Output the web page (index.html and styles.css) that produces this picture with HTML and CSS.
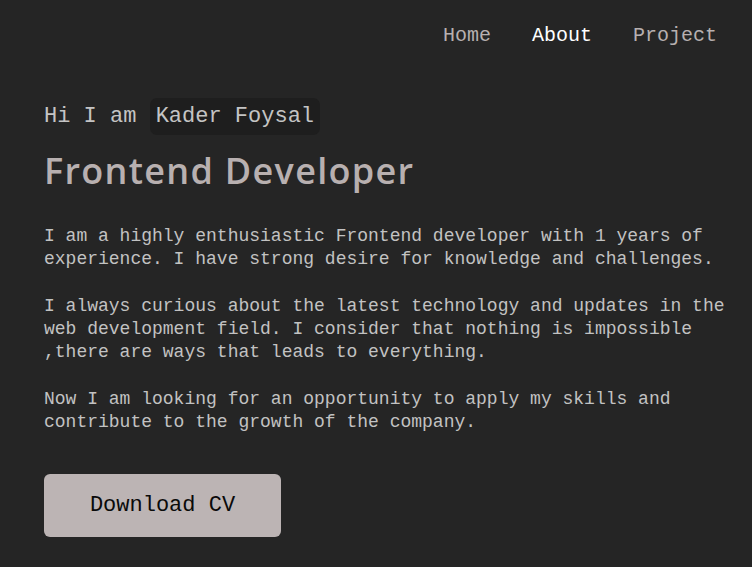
FILE: index.html
```html
<!DOCTYPE html>
<html lang="en">
<head>
<meta charset="utf-8">
<title>Kader Foysal</title>
<link rel="stylesheet" href="styles.css">
</head>
<body>
<header class="nav">
  <a class="nav-link" href="#">Home</a>
  <a class="nav-link active" href="#">About</a>
  <a class="nav-link" href="#">Project</a>
</header>
<main class="about">
  <p class="greet">Hi I am <span class="name">Kader Foysal</span></p>
  <h1 class="title">Frontend Developer</h1>
  <p class="text">I am a highly enthusiastic Frontend developer with 1 years of experience. I have strong desire for knowledge and challenges.</p>
  <p class="text">I always curious about the latest technology and updates in the web development field. I consider that nothing is impossible ,there are ways that leads to everything.</p>
  <p class="text">Now I am looking for an opportunity to apply my skills and contribute to the growth of the company.</p>
  <button class="btn">Download CV</button>
</main>
</body>
</html>
```
FILE: styles.css
```css
html, body {
  margin: 0;
  padding: 0;
  background: #252525;
  height: 100%;
}
body {
  font-family: "Liberation Mono", "DejaVu Sans Mono", monospace;
  color: #c2c2c2;
}
.nav {
  display: flex;
  justify-content: flex-end;
  gap: 41px;
  padding: 23px 35px 0 0;
  height: 26px;
}
.nav-link {
  font-size: 20px;
  line-height: 26px;
  color: #b7b0b0;
  text-decoration: none;
}
.nav-link.active {
  color: #ffffff;
}
.about {
  padding: 49px 0 0 44px;
}
.greet {
  margin: 0;
  font-size: 22px;
  line-height: 37px;
  color: #c4c4c4;
}
.name {
  display: inline-block;
  background: #1e1e1e;
  border-radius: 7px;
  padding: 0 6px;
}
.title {
  margin: 13px 0 31px;
  font-family: "Open Sans", sans-serif;
  font-weight: 600;
  font-size: 36px;
  line-height: 46px;
  letter-spacing: 1.3px;
  color: #b8b0b0;
}
.text {
  margin: 0 0 24px;
  font-size: 18px;
  line-height: 23px;
  color: #c2c2c2;
  max-width: 700px;
}
.btn {
  margin-top: 16px;
  width: 237px;
  height: 63px;
  border: none;
  border-radius: 6px;
  background: #bcb4b4;
  color: #0a0a0a;
  font-family: "Liberation Mono", "DejaVu Sans Mono", monospace;
  font-size: 22px;
}
```
